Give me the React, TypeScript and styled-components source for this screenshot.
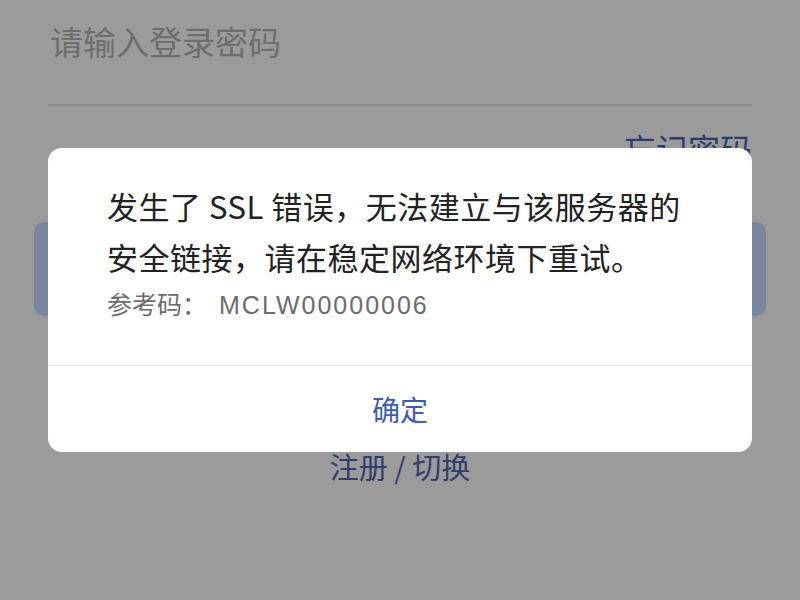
import React from 'react';
import styled, { createGlobalStyle } from 'styled-components';

const GlobalStyle = createGlobalStyle`
  html, body {
    margin: 0;
    padding: 0;
    background: #9b9b9b;
  }
  body {
    font-family: "Noto Sans CJK SC", "Noto Sans", sans-serif;
  }
`;

export default function App() {
  return (
    <>
      <GlobalStyle />
      <Page>
        <Field>
          <Placeholder>请输入登录密码</Placeholder>
        </Field>
        <Forgot>忘记密码</Forgot>
        <LoginButton />
        <Register>注册 / 切换</Register>

        <Dialog>
          <Body>
            <Message>
              发生了 SSL 错误，无法建立与该服务器的
              <br />
              安全链接，请在稳定网络环境下重试。
            </Message>
            <RefCode>
              参考码：<Code>MCLW00000006</Code>
            </RefCode>
          </Body>
          <Confirm>确定</Confirm>
        </Dialog>
      </Page>
    </>
  );
}

const Page = styled.div`
  position: relative;
  width: 800px;
  height: 600px;
  overflow: hidden;
  background: #9b9b9b;
  padding: 0 48px 0 48px;
  box-sizing: border-box;
  display: flex;
  flex-direction: column;
`;

const Field = styled.div`
  height: 106px;
  border-bottom: 2px solid #8b8b8b;
  box-sizing: border-box;
  padding-top: 18px;
`;

const Placeholder = styled.div`
  font-size: 33px;
  line-height: 46px;
  color: #6e6e6e;
  padding-left: 2px;
`;

const Forgot = styled.div`
  align-self: flex-end;
  margin-top: 22px;
  font-size: 32px;
  line-height: 40px;
  color: #2c3c6a;
`;

const LoginButton = styled.div`
  margin: 54px -14px 0;
  height: 94px;
  border-radius: 10px;
  background: #7a869e;
`;

const Register = styled.div`
  align-self: center;
  margin-top: 130px;
  font-size: 29px;
  line-height: 40px;
  color: #2f3e6c;
`;

const Dialog = styled.div`
  position: absolute;
  left: 48px;
  top: 148px;
  width: 704px;
  height: 304px;
  background: #ffffff;
  border-radius: 14px;
  display: flex;
  flex-direction: column;
  overflow: hidden;
`;

const Body = styled.div`
  flex: 1;
  padding: 32px 40px 0 59px;
  border-bottom: 1px solid #e4e4e4;
`;

const Message = styled.div`
  font-size: 31px;
  line-height: 51px;
  letter-spacing: 0.5px;
  color: #222222;
  white-space: nowrap;
`;

const RefCode = styled.div`
  margin-top: 3px;
  font-size: 25px;
  line-height: 36px;
  color: #6c6c6c;
`;

const Code = styled.span`
  margin-left: 12px;
  font-family: "Liberation Sans", Arial, sans-serif;
  font-size: 25px;
  letter-spacing: 2px;
`;

const Confirm = styled.div`
  height: 86px;
  display: flex;
  align-items: center;
  justify-content: center;
  font-size: 28px;
  color: #3b5db2;
`;
